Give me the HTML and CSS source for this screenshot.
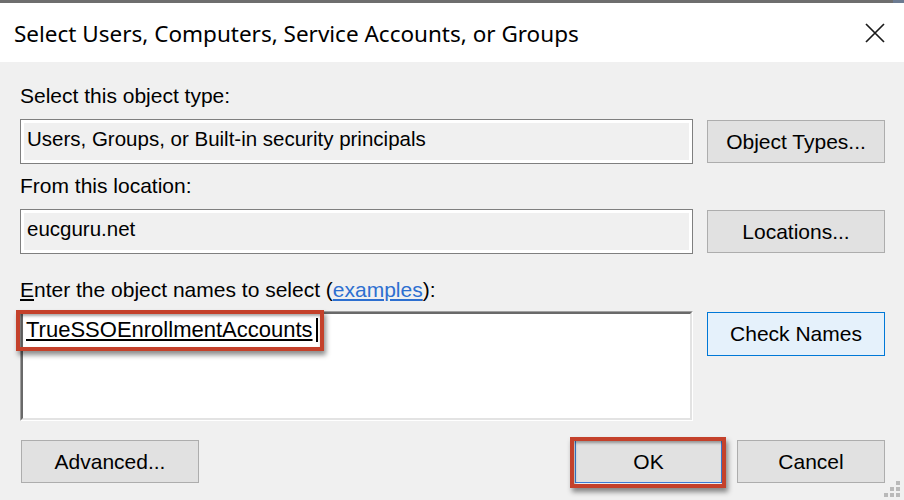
FILE: index.html
```html
<!DOCTYPE html>
<html lang="en">
<head>
    <meta charset="UTF-8">
    <meta name="viewport" content="width=device-width, initial-scale=1.0">
    <title>Select Users, Computers, Service Accounts, or Groups</title>
    <link rel="stylesheet" href="styles.css">
</head>
<body>
    <div class="dialog">
        <div class="edge"></div>
        <div class="titlebar">
            <span class="title">Select Users, Computers, Service Accounts, or Groups</span>
            <svg class="close" width="20" height="20" viewBox="0 0 20 20">
                <path d="M1 1L19 19M19 1L1 19" stroke="#1a1a1a" stroke-width="1.7" fill="none"/>
            </svg>
        </div>

        <div class="body">
            <div class="label first">Select this object type:</div>
            <div class="row">
                <div class="field">Users, Groups, or Built-in security principals</div>
                <button class="btn">Object Types...</button>
            </div>

            <div class="label">From this location:</div>
            <div class="row">
                <div class="field">eucguru.net</div>
                <button class="btn">Locations...</button>
            </div>

            <div class="label third"><u>E</u>nter the object names to select (<a href="#" class="link">examples</a>):</div>
            <div class="row names-row">
                <div class="names">
                    <div class="names-inner">
                        <span class="entry"><span class="entry-text">TrueSSOEnrollmentAccounts</span><span class="caret"></span><span class="mark mark-entry"></span></span>
                    </div>
                </div>
                <button class="btn default">Check Names</button>
            </div>

            <div class="actions">
                <button class="btn advanced">Advanced...</button>
                <div class="spacer"></div>
                <span class="flagged">
                    <button class="btn ok">OK</button>
                    <span class="mark mark-ok"></span>
                </span>
                <button class="btn cancel">Cancel</button>
            </div>
        </div>

        <svg class="grip" width="18" height="18" viewBox="0 0 18 18">
            <rect x="12" y="1" width="4" height="4" fill="#b9b9b9"/>
            <rect x="6" y="7" width="4" height="4" fill="#b9b9b9"/>
            <rect x="12" y="7" width="4" height="4" fill="#b9b9b9"/>
            <rect x="0" y="13" width="4" height="4" fill="#b9b9b9"/>
            <rect x="6" y="13" width="4" height="4" fill="#b9b9b9"/>
            <rect x="12" y="13" width="4" height="4" fill="#b9b9b9"/>
        </svg>
    </div>
</body>
</html>
```

FILE: styles.css
```css
body { margin: 0; font-family: "Liberation Sans", Arial, sans-serif; color: #000; }
.dialog { position: relative; width: 904px; height: 500px; background: #f0f0f0; overflow: hidden; }
.edge { height: 3px; background: linear-gradient(to right, #6e6e6e 893px, #6c7b91 893px); }
.titlebar { height: 59px; box-sizing: border-box; background: #fff; display: flex; align-items: center; justify-content: space-between; padding: 2px 19px 0 14px; }
.title { font-family: "Noto Sans", sans-serif; font-size: 22.5px; }
.close { display: block; margin-top: -2px; }

.body { padding: 0 19px 0 20px; font-size: 21px; }
.label { line-height: 22px; margin: 11px 0 12px; }
.label.first { margin-top: 23px; }
.label.third { margin-top: 25px; margin-bottom: 10px; }
.link { color: #2d6fd0; }

.row { display: flex; align-items: center; gap: 14px; }
.field { width: 673px; height: 45px; box-sizing: border-box; border: 1px solid #7f7f7f; box-shadow: inset 0 0 0 3px #fff; padding: 8px 6px; line-height: 22px; font-size: 20.5px; }

.btn { width: 178px; height: 43px; padding: 0; font-family: inherit; font-size: 21px; color: #000; background: #e1e1e1; border: 1px solid #adadad; }
.btn.default { background: #e5f1fb; border-color: #0078d7; height: 44px; margin-top: 1px; }

.names-row { align-items: flex-start; }
.names { width: 673px; height: 110px; box-sizing: border-box; border: 1px solid; border-color: #a0a0a0 #fff #fff #a0a0a0; }
.names-inner { height: 100%; box-sizing: border-box; background: #fff; border: 2px solid; border-color: #696969 #e3e3e3 #e3e3e3 #696969; padding: 4px 3px; line-height: 24px; font-size: 22px; }
.entry { position: relative; display: inline-block; }
.entry-text { text-decoration: underline; }
.caret { display: inline-block; width: 2px; height: 24px; background: #000; margin-left: 3px; vertical-align: top; }

.mark { position: absolute; border: 4px solid #c4412b; box-shadow: 2px 4px 5px rgba(0,0,0,0.45), inset 1px 2px 3px rgba(0,0,0,0.35); pointer-events: none; }
.mark-entry { top: -8px; bottom: -9px; left: -10px; right: -6px; }

.actions { display: flex; margin-top: 19px; }
.advanced { margin-left: 1px; }
.spacer { flex: 1; }
.flagged { position: relative; display: flex; }
.ok { width: 147px; border-color: #3a7bd5; }
.mark-ok { top: -3px; bottom: -5px; left: -5px; right: -4px; }
.cancel { width: 148px; margin-left: 15px; }

.grip { position: absolute; right: 2px; bottom: 2px; }
```
